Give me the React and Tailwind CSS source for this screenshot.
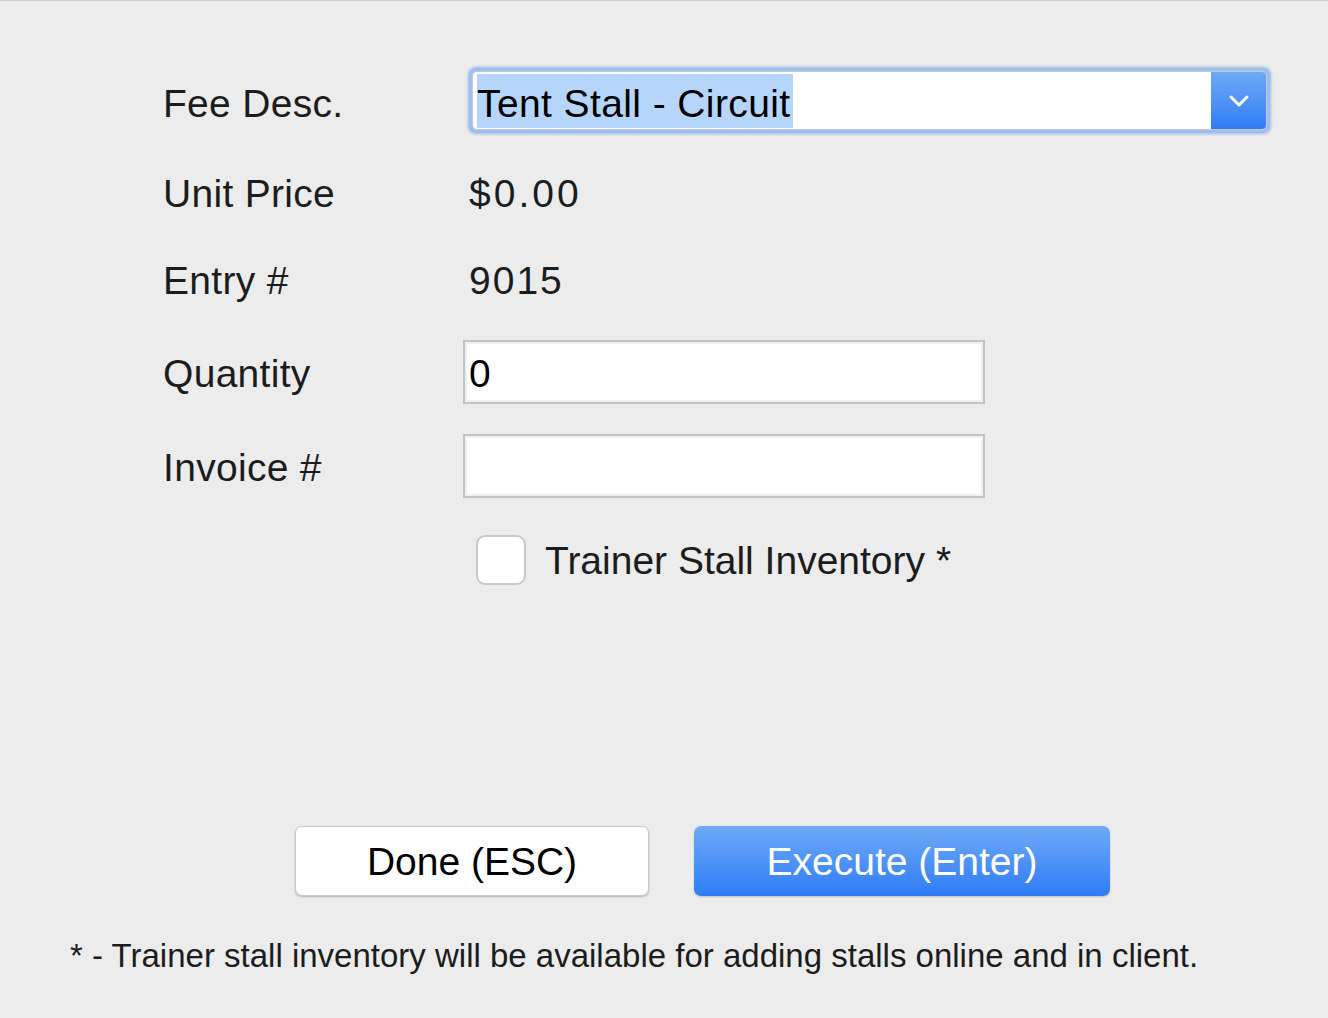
import React from "react";

export default function App() {
  const font = { fontFamily: '"Liberation Sans", Arial, sans-serif' };
  return (
    <div className="w-[1328px] h-[1018px] bg-[#ececec] border-t border-[#cfcfcf] text-[#1c1c1c] overflow-hidden" style={font}>
      <div className="flex flex-col pl-[163px] tracking-[0.3px]">
        {/* Fee Desc */}
        <div className="flex items-center mt-[67px] h-[65px]">
          <div className="w-[306px] text-[39px] leading-none pt-[6px]">Fee Desc.</div>
          <div className="w-[801px] h-[65px] rounded-[7px] bg-[#9dbff0] p-[3px] shadow-[0_0_3px_1px_rgba(100,150,230,0.6)]">
            <div className="flex h-full rounded-[5px] overflow-hidden bg-white border border-[#c9c9c9]">
              <div className="flex-1 flex items-center pl-[4px]">
                <span className="bg-[#b5d5fb] text-[39px] leading-none pt-[10px] pb-[5px] pr-[2px] text-black tracking-[0.4px]">Tent Stall - Circuit</span>
              </div>
              <div className="w-[55px] h-full bg-gradient-to-b from-[#6ea9f6] to-[#2f7cf5] flex items-center justify-center">
                <svg width="24" height="16" viewBox="0 0 24 16" fill="none">
                  <path d="M4 4 L12 12 L20 4" stroke="white" strokeWidth="3" strokeLinecap="round" strokeLinejoin="round" />
                </svg>
              </div>
            </div>
          </div>
        </div>
        {/* Unit Price */}
        <div className="flex items-center mt-[30px] h-[60px] text-[39px] leading-none">
          <div className="w-[306px]">Unit Price</div>
          <div className="tracking-[3px]">$0.00</div>
        </div>
        {/* Entry */}
        <div className="flex items-center mt-[27px] h-[60px] text-[39px] leading-none">
          <div className="w-[306px]">Entry #</div>
          <div className="tracking-[2px]">9015</div>
        </div>
        {/* Quantity */}
        <div className="flex items-center mt-[30px] h-[64px] text-[39px] leading-none">
          <div className="w-[300px] pt-[2px]">Quantity</div>
          <div className="w-[522px] h-[64px] bg-white border-2 border-[#c2c2c2] flex items-center pl-[4px] shadow-[inset_0_0_0_2px_#f0f0f0]">
            <span className="text-black pt-[2px]">0</span>
          </div>
        </div>
        {/* Invoice */}
        <div className="flex items-center mt-[30px] h-[64px] text-[39px] leading-none">
          <div className="w-[300px] pt-[2px]">Invoice #</div>
          <div className="w-[522px] h-[64px] bg-white border-2 border-[#c2c2c2] shadow-[inset_0_0_0_2px_#f0f0f0]"></div>
        </div>
        {/* Checkbox */}
        <div className="flex items-center mt-[32px] h-[60px] text-[39px] leading-none">
          <div className="w-[313px]"></div>
          <div className="w-[50px] h-[50px] rounded-[9px] bg-white border-2 border-[#c8c8c8]"></div>
          <div className="ml-[19px] tracking-[0px]">Trainer Stall Inventory *</div>
        </div>
      </div>
      {/* Buttons */}
      <div className="flex mt-[236px] ml-[295px] gap-[45px] text-[39px] leading-none">
        <button className="w-[354px] h-[70px] rounded-[7px] bg-white border border-[#c9c9c9] shadow-[0_1px_2px_rgba(0,0,0,0.25)] text-black flex items-center justify-center">
          Done (ESC)
        </button>
        <button className="w-[416px] h-[70px] rounded-[7px] bg-gradient-to-b from-[#6eaaf7] to-[#2d7bf5] text-white flex items-center justify-center shadow-[0_1px_2px_rgba(0,0,0,0.2)]">
          Execute (Enter)
        </button>
      </div>
      <div className="ml-[70px] mt-[43px] text-[33px] leading-none text-[#1c1c1c]">
        * - Trainer stall inventory will be available for adding stalls online and in client.
      </div>
    </div>
  );
}
